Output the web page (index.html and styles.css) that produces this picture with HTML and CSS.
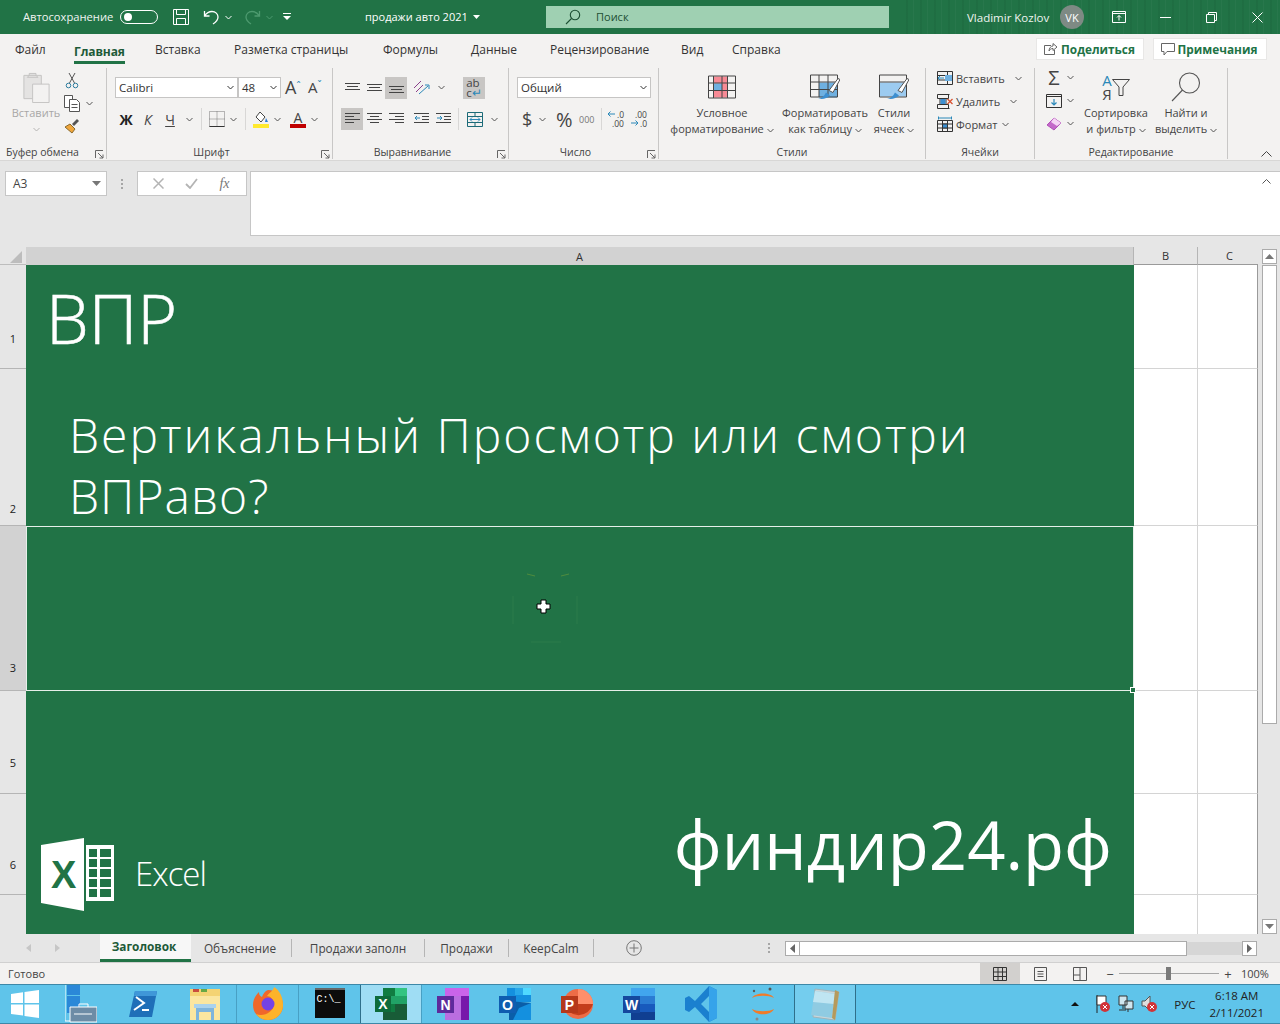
FILE: index.html
```html
<!DOCTYPE html>
<html lang="ru">
<head>
<meta charset="utf-8">
<title>продажи авто 2021 - Excel</title>
<link rel="stylesheet" href="styles.css">
</head>
<body>
<div class="app">
  <header class="titlebar">
    <span class="autosave">Автосохранение</span>
    <span class="toggle"><i class="knob"></i></span>
    <svg class="qa save" width="18" height="18" viewBox="0 0 18 18" fill="none" stroke="#fff"><path d="M1.500 1.500h15v15h-15zM4.500 1.500v5h9v-5M4.500 16.500v-6h9v6"/></svg>
    <svg class="qa undo" width="17" height="17" viewBox="0 0 17 17" fill="none" stroke="#fff" stroke-width="1.300"><path d="M1.500 2v5h5M1.500 7C3.500 4 6 2.500 9 2.500c3.500 0 6 2.500 6 5.500 0 3-2 5-5 7"/></svg>
    <svg class="chev qa-chev" width="7" height="5" viewBox="0 0 7 5" fill="none" stroke="#fff"><path d="M.5 1l3 3 3-3"/></svg>
    <svg class="qa redo" width="17" height="17" viewBox="0 0 17 17" fill="none" stroke="#4d9a6f" stroke-width="1.300"><path d="M15.500 2v5h-5M15.500 7C13.500 4 11 2.500 8 2.500c-3.500 0-6 2.500-6 5.500 0 3 2 5 5 7"/></svg>
    <svg class="chev qa-chev" width="7" height="5" viewBox="0 0 7 5" fill="none" stroke="#4d9a6f"><path d="M.5 1l3 3 3-3"/></svg>
    <svg class="qa more" width="8" height="8" viewBox="0 0 8 8" fill="#fff"><path d="M0 0h8v1H0zM0 3h8L4 7z"/></svg>
    <span class="doc">продажи авто 2021</span>
    <svg class="doc-caret" width="7" height="4" viewBox="0 0 7 4" fill="#fff"><path d="M0 0h7L3.500 4z"/></svg>
    <div class="search">
      <svg width="16" height="16" viewBox="0 0 16 16" fill="none" stroke="#1d4f33" stroke-width="1.100"><circle cx="10" cy="6" r="4.700"/><path d="M6.500 9.500L1 15"/></svg>
      <span>Поиск</span>
    </div>
    <span class="user">Vladimir Kozlov</span>
    <span class="avatar">VK</span>
    <svg class="win w-ribbon" width="14" height="12" viewBox="0 0 14 12" fill="none" stroke="#fff"><path d="M.5.500h13v11H.5zM.5 2.500h13M7 9.500V4.500M5 6.500l2-2 2 2"/></svg>
    <svg class="win w-min" width="11" height="1" viewBox="0 0 11 1" fill="#fff"><path d="M0 0h11v1H0z"/></svg>
    <svg class="win w-max" width="11" height="11" viewBox="0 0 11 11" fill="none" stroke="#fff"><path d="M.5 2.500h8v8h-8zM2.500 2.500v-2h8v8h-2"/></svg>
    <svg class="win w-close" width="11" height="11" viewBox="0 0 11 11" fill="none" stroke="#fff"><path d="M.5.500l10 10M10.500.500l-10 10"/></svg>
  </header>

  <nav class="tabs">
    <div class="tablist">
      <span>Файл</span><span class="tab-on">Главная</span><span>Вставка</span><span>Разметка страницы</span><span>Формулы</span><span>Данные</span><span>Рецензирование</span><span>Вид</span><span>Справка</span>
    </div>
    <div class="tab-actions">
      <span class="pill pill-share"><svg width="15" height="14" viewBox="0 0 15 14" fill="none" stroke="#666"><path d="M8 3.500H1.500v9h10V8M6 9c0-3 2-5 4-5V1.500L14 5l-4 3.500V6.500C8 6.500 7 7.500 6 9z"/></svg>Поделиться</span>
      <span class="pill pill-note"><svg width="14" height="13" viewBox="0 0 14 13" fill="none" stroke="#666"><path d="M.5.500h13v8H6L3 12V8.500H.5z"/></svg>Примечания</span>
    </div>
  </nav>

  <section class="ribbon">
    <div class="group g1">
      <div class="gbody clip">
        <div class="paste">
          <svg width="28" height="31" viewBox="0 0 28 32" fill="#e4e3e2" stroke="#c4c3c2"><path d="M1.500 3.500h18v24h-18zM7 3.500V1.500h7v2l2 2H5z"/><path d="M10.500 12.500h17v19h-17z" fill="#f3f2f1"/></svg>
          <span class="dim">Вставить</span>
          <svg class="chev" width="7" height="5" viewBox="0 0 7 5" fill="none" stroke="#b5b4b3"><path d="M.5 1l3 3 3-3"/></svg>
        </div>
        <div class="clipcol">
          <svg width="14" height="17" viewBox="0 0 14 17" fill="none" stroke="#555"><path d="M4 1l5.500 10M10 1L4.500 11"/><circle cx="3.500" cy="13.500" r="2.300" stroke="#2c7c9f"/><circle cx="10.500" cy="13.500" r="2.300" stroke="#2c7c9f"/></svg>
          <span class="row-inline"><svg width="17" height="17" viewBox="0 0 17 17" fill="#fff" stroke="#555"><path d="M.5.500h8v12h-8z"/><path d="M5.500 4.500h7l3 3v9h-10zM7.500 9.500h6M7.500 12.500h6"/></svg><svg class="chev" width="7" height="5" viewBox="0 0 7 5" fill="none" stroke="#555"><path d="M.5 1l3 3 3-3"/></svg></span>
          <svg width="16" height="16" viewBox="0 0 16 16"><path d="M1 9l5-3 5 5-3 4z" fill="#f0a63c" stroke="#8a6a2c"/><path d="M8 6l5-5 2 2-5 5z" fill="#555"/></svg>
        </div>
      </div>
      <div class="glabel left">Буфер обмена</div>
      <svg class="launch" width="9" height="9" viewBox="0 0 9 9" fill="none" stroke="#666"><path d="M.5 8V.5H8M3 3l5 5M8 4.500V8H4.500"/></svg>
    </div>

    <div class="group g2">
      <div class="gbody">
        <div class="trow">
          <div class="select s-font"><span>Calibri</span><svg class="chev" width="7" height="5" viewBox="0 0 7 5" fill="none" stroke="#333"><path d="M.5 1l3 3 3-3"/></svg></div>
          <div class="select s-size"><span>48</span><svg class="chev" width="7" height="5" viewBox="0 0 7 5" fill="none" stroke="#333"><path d="M.5 1l3 3 3-3"/></svg></div>
          <span class="grow-a">A<sup>ˆ</sup></span><span class="shrink-a">A<sup>ˇ</sup></span>
        </div>
        <div class="trow t2 fontrow">
          <b class="tool w22 fb">Ж</b><i class="tool w22 fi">К</i><u class="tool w22 fu">Ч</u>
          <svg class="chev c12" width="7" height="5" viewBox="0 0 7 5" fill="none" stroke="#555"><path d="M.5 1l3 3 3-3"/></svg>
          <i class="vsep"></i>
          <svg width="16" height="16" viewBox="0 0 16 16" fill="none" stroke="#777" stroke-dasharray="1 1"><path d="M.5.500h15v15H.5zM8 .5v15M.5 8h15"/><path d="M.5 15.500h15" stroke="#333" stroke-dasharray="none"/></svg>
          <svg class="chev c12" width="7" height="5" viewBox="0 0 7 5" fill="none" stroke="#555"><path d="M.5 1l3 3 3-3"/></svg>
          <i class="vsep"></i>
          <svg width="16" height="17" viewBox="0 0 16 17"><path d="M7 1l5 5-4 5-5-5z" fill="#fff" stroke="#444"/><path d="M13 7l2 4h-3z" fill="#2b7cd3"/><path d="M0 13h16v4H0z" fill="#ffe92e"/></svg>
          <svg class="chev c12" width="7" height="5" viewBox="0 0 7 5" fill="none" stroke="#555"><path d="M.5 1l3 3 3-3"/></svg>
          <span class="fcolor">A</span>
          <svg class="chev c12" width="7" height="5" viewBox="0 0 7 5" fill="none" stroke="#555"><path d="M.5 1l3 3 3-3"/></svg>
        </div>
      </div>
      <div class="glabel with-launch">Шрифт</div>
      <svg class="launch" width="9" height="9" viewBox="0 0 9 9" fill="none" stroke="#666"><path d="M.5 8V.5H8M3 3l5 5M8 4.500V8H4.500"/></svg>
    </div>

    <div class="group g3">
      <div class="gbody">
        <div class="trow">
          <span class="tool w22"><svg width="15" height="12" viewBox="0 0 15 12" stroke="#444"><path d="M0 1.500h15M2 4.500h11M0 7.500h15"/></svg></span>
          <span class="tool w22"><svg width="15" height="12" viewBox="0 0 15 12" stroke="#444"><path d="M0 2.500h15M2 5.500h11M0 8.500h15"/></svg></span>
          <span class="tool w22 on"><svg width="15" height="12" viewBox="0 0 15 12" stroke="#444"><path d="M0 4.500h15M2 7.500h11M0 10.500h15"/></svg></span>
          <span class="tool w22 orient"><svg width="18" height="16" viewBox="0 0 18 16" fill="none" stroke="#555"><path d="M1 8l7-7M3 12l7-7" stroke="#8a3f8a"/><path d="M6 14l9-8M12 5h4v4" stroke="#2b88b8"/></svg></span>
          <svg class="chev c12" width="7" height="5" viewBox="0 0 7 5" fill="none" stroke="#555"><path d="M.5 1l3 3 3-3"/></svg>
          <span class="wrap on"><span>ab<br>c<em>↵</em></span></span>
        </div>
        <div class="trow t2">
          <span class="tool w22 on"><svg width="15" height="12" viewBox="0 0 15 12" stroke="#444"><path d="M0 .5h15M0 3.500h9M0 6.500h15M0 9.500h9"/></svg></span>
          <span class="tool w22"><svg width="15" height="12" viewBox="0 0 15 12" stroke="#444"><path d="M0 .5h15M3 3.500h9M0 6.500h15M3 9.500h9"/></svg></span>
          <span class="tool w22"><svg width="15" height="12" viewBox="0 0 15 12" stroke="#444"><path d="M0 .5h15M6 3.500h9M0 6.500h15M6 9.500h9"/></svg></span>
          <span class="tool w22 ind"><svg width="15" height="12" viewBox="0 0 15 12" fill="none" stroke="#444"><path d="M0 .5h15M8 3.500h7M8 6.500h7M0 9.500h15"/><path d="M6 5H1M3 3L1 5l2 2" stroke="#2b88b8"/></svg></span>
          <span class="tool w22"><svg width="15" height="12" viewBox="0 0 15 12" fill="none" stroke="#444"><path d="M0 .5h15M8 3.500h7M8 6.500h7M0 9.500h15"/><path d="M1 5h5M4 3l2 2-2 2" stroke="#2b88b8"/></svg></span>
          <i class="vsep v-merge"></i>
          <span class="tool w22"><svg width="16" height="15" viewBox="0 0 16 15" fill="none" stroke="#1c6b78"><path d="M.5.500h15v14H.5zM.5 4.500h15M.5 10.500h15M8 .5v4M8 10.500v4"/><path d="M3 7.500h10M5 5.500l-2 2 2 2M11 5.500l2 2-2 2" stroke="#2b88b8"/></svg></span>
          <svg class="chev c12" width="7" height="5" viewBox="0 0 7 5" fill="none" stroke="#555"><path d="M.5 1l3 3 3-3"/></svg>
        </div>
      </div>
      <div class="glabel with-launch">Выравнивание</div>
      <svg class="launch" width="9" height="9" viewBox="0 0 9 9" fill="none" stroke="#666"><path d="M.5 8V.5H8M3 3l5 5M8 4.500V8H4.500"/></svg>
    </div>

    <div class="group g4">
      <div class="gbody">
        <div class="trow">
          <div class="select s-num"><span>Общий</span><svg class="chev" width="7" height="5" viewBox="0 0 7 5" fill="none" stroke="#333"><path d="M.5 1l3 3 3-3"/></svg></div>
        </div>
        <div class="trow t2 numrow">
          <span class="n-dollar">$</span>
          <svg class="chev c12" width="7" height="5" viewBox="0 0 7 5" fill="none" stroke="#555"><path d="M.5 1l3 3 3-3"/></svg>
          <span class="n-pct">%</span>
          <span class="n-000">000</span>
          <i class="vsep"></i>
          <svg class="decsvg" width="20" height="18" viewBox="0 0 20 18" fill="none"><path d="M1 4h7M3.500 1.500L1 4l2.500 2.500" stroke="#2b88b8"/><text x="10" y="8" class="dec">.0</text><text x="5" y="17" class="dec">.00</text></svg>
          <svg class="decsvg" width="20" height="18" viewBox="0 0 20 18" fill="none"><path d="M1 13h7M5.500 10.500L8 13l-2.500 2.500" stroke="#2b88b8"/><text x="5" y="8" class="dec">.00</text><text x="10" y="17" class="dec">.0</text></svg>
        </div>
      </div>
      <div class="glabel with-launch">Число</div>
      <svg class="launch" width="9" height="9" viewBox="0 0 9 9" fill="none" stroke="#666"><path d="M.5 8V.5H8M3 3l5 5M8 4.500V8H4.500"/></svg>
    </div>

    <div class="group g5">
      <div class="gbody bigrow">
        <div class="big b-cond">
          <svg width="28" height="23" viewBox="0 0 28 23"><path d="M5 1h14v7H5zM14 8h5v7h-5zM5 15h14v7H5z" fill="#f78a95"/><path d="M5 8h9v7H5z" fill="#6fb0e0"/><path d="M.5.500h27v22H.5zM.5 7.500h27M.5 15h27M5.500.5v22M14 .5v22M19.500.5v22" fill="none" stroke="#444"/></svg>
          <span>Условное</span><span>форматирование <svg class="chev" width="7" height="5" viewBox="0 0 7 5" fill="none" stroke="#555"><path d="M.5 1l3 3 3-3"/></svg></span>
        </div>
        <div class="big b-table">
          <svg width="30" height="25" viewBox="0 0 30 25"><path d="M9 8h18v15H9z" fill="#6fb0e0"/><path d="M.5.500h27v22H.5zM.5 7.500h27M.5 15h27M9 .5v22M18 .5v22" fill="none" stroke="#444"/><path d="M19 16L28 4l2 1-7 13z" fill="#fff" stroke="#555"/><path d="M8 24c3 0 6-2 8-6l4 3c-3 3-7 4-12 3z" fill="#3d8fd0"/></svg>
          <span>Форматировать</span><span>как таблицу <svg class="chev" width="7" height="5" viewBox="0 0 7 5" fill="none" stroke="#555"><path d="M.5 1l3 3 3-3"/></svg></span>
        </div>
        <div class="big b-style">
          <svg width="30" height="25" viewBox="0 0 30 25"><path d="M1 8h26v14H1z" fill="#9ccbf0"/><path d="M.5.500h27v22H.5zM.5 7.500h27" fill="none" stroke="#444"/><path d="M19 16L28 4l2 1-7 13z" fill="#fff" stroke="#555"/><path d="M8 24c3 0 6-2 8-6l4 3c-3 3-7 4-12 3z" fill="#3d8fd0"/></svg>
          <span>Стили</span><span>ячеек <svg class="chev" width="7" height="5" viewBox="0 0 7 5" fill="none" stroke="#555"><path d="M.5 1l3 3 3-3"/></svg></span>
        </div>
      </div>
      <div class="glabel">Стили</div>
    </div>

    <div class="group g6">
      <div class="gbody cells">
        <div class="cellrow"><svg width="16" height="15" viewBox="0 0 16 15" fill="none" stroke="#333"><path d="M.5.500h15v13H.5zM.5 4.500h15M.5 9h15M10.500.5v13" /><path d="M8 4h7v6H8z" fill="#6fb0e0" stroke="none"/><path d="M1 7h6M3 5L1 7l2 2" stroke="#2b88b8"/></svg><span>Вставить</span><svg class="chev c-ins" width="7" height="5" viewBox="0 0 7 5" fill="none" stroke="#555"><path d="M.5 1l3 3 3-3"/></svg></div>
        <div class="cellrow"><svg width="16" height="15" viewBox="0 0 16 15" fill="none" stroke="#333"><path d="M.5.500h12M.5 14.500h12M.5.500v4h11v-4M.5 14.500v-4h11v4M3 4.500h6v6H3z"/><path d="M3.500 5h5v5h-5z" fill="#3d8fd0" stroke="none"/><path d="M10.500 5l5 5M15.500 5l-5 5" stroke="#d8512f" stroke-width="1.300"/></svg><span>Удалить</span><svg class="chev c-del" width="7" height="5" viewBox="0 0 7 5" fill="none" stroke="#555"><path d="M.5 1l3 3 3-3"/></svg></div>
        <div class="cellrow"><svg width="16" height="16" viewBox="0 0 16 16" fill="none" stroke="#333"><path d="M1.500.5v3M14.500.5v3M1.500 2h13" stroke="#2b88b8"/><path d="M.5 4.500h15v11H.5zM.5 8h15M.5 12h15M5.500 4.500v11M10.500 4.500v11"/><path d="M5.500 8h5v4h-5z" fill="#3d8fd0"/></svg><span>Формат</span><svg class="chev c-fmt" width="7" height="5" viewBox="0 0 7 5" fill="none" stroke="#555"><path d="M.5 1l3 3 3-3"/></svg></div>
      </div>
      <div class="glabel">Ячейки</div>
    </div>

    <div class="group g7">
      <div class="gbody bigrow">
        <div class="editcol">
          <div class="editrow"><span class="sigma">Σ</span><svg class="chev" width="7" height="5" viewBox="0 0 7 5" fill="none" stroke="#555"><path d="M.5 1l3 3 3-3"/></svg></div>
          <div class="editrow"><svg width="16" height="14" viewBox="0 0 16 14" fill="none" stroke="#333"><path d="M.5.500h15v13H.5zM.5 2.500h15"/><path d="M8 5v6M5.500 8.500L8 11l2.500-2.500" stroke="#2b88b8" stroke-width="1.200"/></svg><svg class="chev" width="7" height="5" viewBox="0 0 7 5" fill="none" stroke="#555"><path d="M.5 1l3 3 3-3"/></svg></div>
          <div class="editrow"><svg width="16" height="14" viewBox="0 0 16 14"><path d="M1 8l7-7 7 5-7 7z" fill="#c368c9" stroke="#b14fb8"/><path d="M5 5l6 4 4-3-7-5z" fill="#f5d3f5"/></svg><svg class="chev" width="7" height="5" viewBox="0 0 7 5" fill="none" stroke="#555"><path d="M.5 1l3 3 3-3"/></svg></div>
        </div>
        <div class="big b-sort">
          <div class="sorticon"><span class="az"><em>А</em><b>Я</b></span><svg width="18" height="17" viewBox="0 0 18 17" fill="none" stroke="#444"><path d="M.5.500h17L11 8v8.500H7V8z"/></svg></div>
          <span>Сортировка</span><span>и фильтр <svg class="chev" width="7" height="5" viewBox="0 0 7 5" fill="none" stroke="#555"><path d="M.5 1l3 3 3-3"/></svg></span>
        </div>
        <div class="big b-find">
          <svg width="30" height="30" viewBox="0 0 30 30" fill="none" stroke="#555" stroke-width="1.100"><circle cx="18.500" cy="11" r="10"/><path d="M11.500 18L1 29"/></svg>
          <span>Найти и</span><span>выделить <svg class="chev" width="7" height="5" viewBox="0 0 7 5" fill="none" stroke="#555"><path d="M.5 1l3 3 3-3"/></svg></span>
        </div>
      </div>
      <div class="glabel">Редактирование</div>
    </div>
    <svg class="collapse" width="11" height="6" viewBox="0 0 11 6" fill="none" stroke="#444"><path d="M.5 5.500l5-5 5 5"/></svg>
  </section>

  <section class="formula">
    <div class="namebox"><span>A3</span><svg width="9" height="5" viewBox="0 0 9 5" fill="#777"><path d="M0 0h9L4.500 5z"/></svg></div>
    <span class="fdots"><i></i><i></i><i></i></span>
    <div class="fbtns">
      <svg width="11" height="11" viewBox="0 0 11 11" fill="none" stroke="#b4b4b4" stroke-width="1.500"><path d="M.5.500l10 10M10.500.500l-10 10"/></svg>
      <svg width="13" height="11" viewBox="0 0 13 11" fill="none" stroke="#b4b4b4" stroke-width="1.800"><path d="M1 6l4 4 7-9"/></svg>
      <span class="fx">fx</span>
    </div>
    <div class="finput"><svg width="9" height="5" viewBox="0 0 9 5" fill="none" stroke="#555"><path d="M.5 4.500l4-4 4 4"/></svg></div>
  </section>

  <main class="sheet">
    <div class="corner"><svg width="12" height="12" viewBox="0 0 12 12" fill="#bdbdbd"><path d="M12 0v12H0z"/></svg></div>
    <div class="colhead col-a">A</div>
    <div class="colhead col-b">B</div>
    <div class="colhead col-c">C</div>

    <div class="rowhead rh1">1</div>
    <div class="rowhead rh2">2</div>
    <div class="rowhead rh3 sel">3</div>
    <div class="rowhead rh5">5</div>
    <div class="rowhead rh6">6</div>
    <div class="rowhead rh7"></div>

    <div class="hero">
      <div class="h1"><span>ВПР</span></div>
      <div class="h2"><p><span class="l1">Вертикальный Просмотр или смотри</span><br><span class="l2">ВПРаво?</span></p></div>
      <div class="h3">
        <svg class="ghost" width="70" height="72" viewBox="0 0 70 72" fill="none" stroke="#2d7d4a"><path d="M16 2l8 2M58 2l-8 2" stroke="#4f8c3e"/><path d="M2 24v28M66 24v28M20 70h30"/></svg>
        <svg class="plus" width="15" height="15" viewBox="0 0 15 15"><path d="M5 1h5v4h4v5h-4v4H5v-4H1V5h4z" fill="#fff" stroke="#000"/></svg>
        <i class="handle"></i>
      </div>
      <div class="h5"></div>
      <div class="h6">
        <div class="xl">
          <svg width="73" height="73" viewBox="0 0 73 73"><path d="M0 7L43 0v73L0 65z" fill="#fff"/><text x="10" y="50" class="xl-x">X</text><path d="M45 7h28v56H45zM48 11v8h8v-8zM59 11v8h11v-8zM48 21v8h8v-8zM59 21v8h11v-8zM48 31v8h8v-8zM59 31v8h11v-8zM48 41v8h8v-8zM59 41v8h11v-8zM48 51v8h8v-8zM59 51v8h11v-8z" fill="#fff" fill-rule="evenodd"/></svg>
          <span>Excel</span>
        </div>
        <span class="site">финдир24.рф</span>
      </div>
      <div class="h7"></div>
    </div>

    <div class="cell c1 cb"></div><div class="cell c1 cc"></div>
    <div class="cell c2 cb"></div><div class="cell c2 cc"></div>
    <div class="cell c3 cb"></div><div class="cell c3 cc"></div>
    <div class="cell c5 cb"></div><div class="cell c5 cc"></div>
    <div class="cell c6 cb"></div><div class="cell c6 cc"></div>
    <div class="cell c7 cb"></div><div class="cell c7 cc"></div>

    <div class="vscroll">
      <span class="sbtn"><svg width="9" height="5" viewBox="0 0 9 5" fill="#777"><path d="M0 5h9L4.500 0z"/></svg></span>
      <span class="vthumb"></span>
      <span class="vtrack"></span>
      <span class="sbtn"><svg width="9" height="5" viewBox="0 0 9 5" fill="#777"><path d="M0 0h9L4.500 5z"/></svg></span>
    </div>
  </main>

  <section class="sheetbar">
    <span class="nav"><svg width="5" height="8" viewBox="0 0 5 8" fill="#c6c6c6"><path d="M5 0v8L0 4z"/></svg><svg width="5" height="8" viewBox="0 0 5 8" fill="#c6c6c6"><path d="M0 0v8l5-4z"/></svg></span>
    <div class="sheets">
      <span class="st st-on">Заголовок</span><span class="st st1">Объяснение</span><span class="st st2">Продажи заполн</span><span class="st st3">Продажи</span><span class="st st4">KeepCalm</span>
    </div>
    <svg class="addsheet" width="16" height="16" viewBox="0 0 16 16" fill="none" stroke="#777"><circle cx="8" cy="8" r="7.300"/><path d="M8 3.500v9M3.500 8h9"/></svg>
    <span class="fdots hd"><i></i><i></i><i></i></span>
    <div class="hscroll">
      <span class="hbtn"><svg width="5" height="9" viewBox="0 0 5 9" fill="#666"><path d="M5 0v9L0 4.500z"/></svg></span>
      <span class="hthumb"></span>
      <span class="htrack"></span>
      <span class="hbtn"><svg width="5" height="9" viewBox="0 0 5 9" fill="#666"><path d="M0 0v9l5-4.500z"/></svg></span>
    </div>
  </section>

  <footer class="status">
    <span class="ready">Готово</span>
    <span class="vw vw-on"><svg width="14" height="14" viewBox="0 0 14 14" fill="none" stroke="#333"><path d="M.5.500h13v13H.5zM.5 5h13M.5 9.500h13M5 .5v13M9.500 .5v13"/></svg></span>
    <span class="vw"><svg width="13" height="14" viewBox="0 0 13 14" fill="none" stroke="#555"><path d="M.5.500h12v13H.5zM3.500 4.500h6M3.500 7h6M3.500 9.500h6"/></svg></span>
    <span class="vw"><svg width="14" height="14" viewBox="0 0 14 14" fill="none" stroke="#555"><path d="M.5.500h13v13H.5zM.5 8h6.500V.5M7 8v5.500"/></svg></span>
    <span class="zm">−</span>
    <span class="slider"><i></i></span>
    <span class="zm">+</span>
    <span class="pct">100%</span>
  </footer>

  <div class="taskbar">
    <span class="tk tk-start"><svg width="28" height="28" viewBox="0 0 28 28" fill="#fff"><path d="M0 4l12-1.700V13H0zM13.500 2.100L28 0v13H13.500zM0 14.500h12v11L0 24zM13.500 14.500H28V28l-14.500-2z"/></svg></span>
    <span class="tk"><svg width="32" height="38" viewBox="0 0 32 38"><path d="M2 0h13v10H2zM2 11h13v17H2z" fill="#2b88d8"/><path d="M0 0v36h5" fill="none" stroke="#fff"/><path d="M5 22h27v15H5z" fill="#6d8ca6" stroke="#fff"/><path d="M14 22v-3h9v3M9 29h18" fill="none" stroke="#fff"/></svg></span>
    <span class="tk"><svg width="28" height="28" viewBox="0 0 28 28"><path d="M6 1h22l-5 26H0z" fill="#1f6fb8"/><path d="M6 1h22l-1 5H5z" fill="#3f97d8"/><path d="M7 7l8 6-10 7M13 20h7" fill="none" stroke="#fff" stroke-width="2"/></svg></span>
    <span class="tk"><svg width="32" height="32" viewBox="0 0 32 32"><path d="M1 1h30v16H1z" fill="#f4d373"/><path d="M4 1h6v3H4z" fill="#c94d3f"/><path d="M12 1h6v3h-6z" fill="#67a845"/><path d="M1 8h30v24H1z" fill="#fbe6a0"/><path d="M7 19h18v13h-3v-8H10v8H7z" fill="#7fb5dc"/><path d="M5 16h22v4H5z" fill="#a9d2ee"/></svg></span>
    <span class="tk tk-sep"><svg width="30" height="34" viewBox="0 0 30 34"><path d="M15 3c8 0 15 6 15 15s-7 15-15 15S0 27 0 18C0 12 3 8 6 5c0 3 1 4 3 5 1-3 3-6 6-7z" fill="#f0682a"/><path d="M30 18c0 9-7 15-15 15-5 0-9-2-12-6 8 3 17-2 18-9 0-6-4-9-7-9 3-4 7-6 7-9 5 3 9 9 9 18z" fill="#fdb32a"/><circle cx="15" cy="17" r="6.500" fill="#7542e5"/></svg></span>
    <span class="tk tk-sep"><span class="cmd">C:\_</span></span>
    <span class="tk tk-on"><svg width="32" height="32" viewBox="0 0 32 32"><path d="M8 0h24v32H8z" fill="#21a366"/><path d="M8 0h12v8H8zM8 16h12v8H8z" fill="#107c41"/><path d="M20 0h12v8H20z" fill="#33c481"/><path d="M20 16h12v8H20z" fill="#185c37"/><path d="M8 24h24v8H8z" fill="#185c37"/><path d="M0 8h16v16H0z" fill="#0e6b3a"/><text x="8" y="21" class="app-l">X</text></svg></span>
    <span class="tk"><svg width="32" height="32" viewBox="0 0 32 32"><path d="M8 0h24v32H8z" fill="#ba6ee0"/><path d="M8 0h24v8H8z" fill="#ca64ea"/><path d="M24 8h8v24h-8z" fill="#7719aa"/><path d="M0 8h17v17H0z" fill="#5e2a9b"/><text x="8.500" y="21.500" class="app-l">N</text></svg></span>
    <span class="tk"><svg width="32" height="32" viewBox="0 0 32 32"><path d="M8 0h24v14H8z" fill="#1490df"/><path d="M16 0h8v7h-8z" fill="#28a8ea"/><path d="M24 0h8v7h-8z" fill="#50d9ff"/><path d="M10 13l22 2v17H10z" fill="#0a5ea8"/><path d="M20 20l12-5v17H14z" fill="#1490df"/><path d="M0 8h17v17H0z" fill="#0f5db0"/><text x="8.500" y="21.500" class="app-l">O</text></svg></span>
    <span class="tk"><svg width="32" height="32" viewBox="0 0 32 32"><circle cx="17" cy="16" r="15" fill="#ed6c47"/><path d="M17 1a15 15 0 0 1 15 15H17z" fill="#ff8f6b"/><path d="M3 16h29a15 15 0 0 1-29 0z" fill="#c43e1c"/><path d="M0 8h17v17H0z" fill="#b5381a"/><text x="8.500" y="21.500" class="app-l">P</text></svg></span>
    <span class="tk"><svg width="32" height="32" viewBox="0 0 32 32"><path d="M8 0h24v8H8z" fill="#41a5ee"/><path d="M8 8h24v8H8z" fill="#2b7cd3"/><path d="M8 16h24v8H8z" fill="#185abd"/><path d="M8 24h24v8H8z" fill="#103f91"/><path d="M0 8h17v17H0z" fill="#15489e"/><text x="8.500" y="21.500" class="app-l">W</text></svg></span>
    <span class="tk"><svg width="32" height="36" viewBox="0 0 32 36"><path d="M24 0l8 4v28l-8 4L10 21l-6 5-4-2V12l4-2 6 5zM24 10l-8 8 8 8z" fill="#1b80cf"/><path d="M24 0l8 4v28l-8 4z" fill="#36a3ea"/></svg></span>
    <span class="tk"><svg width="24" height="36" viewBox="0 0 24 36"><path d="M1 12C4 6 20 6 23 12 18 9 6 9 1 12zM1 23c5 3 17 3 22 0-3 7-19 7-22 0z" fill="#f07c2a"/><circle cx="19" cy="3" r="1.500" fill="#555"/><circle cx="3" cy="5" r="1.200" fill="#555"/><circle cx="6" cy="33" r="1.500" fill="#888"/></svg></span>
    <span class="tk tk-open"><svg width="32" height="36" viewBox="0 0 32 36"><path d="M6 3l24 3-4 28-22-3z" fill="#c9d6da" stroke="#9fb4ba"/><path d="M6 5l20 3-3 24L2 29z" fill="#8fcbe2"/><path d="M6 5l20 3-1 10L4 16z" fill="#bfe5f2"/><path d="M26 4l4 2-4 28-3-2z" fill="#b59a5c"/></svg></span>
    <div class="tray">
      <svg class="tray-up" width="8" height="4" viewBox="0 0 8 4" fill="#111"><path d="M0 4h8L4 0z"/></svg>
      <svg width="16" height="18" viewBox="0 0 16 18"><path d="M2 0v18" stroke="#222"/><path d="M2 1h9v9H2z" fill="#fff" stroke="#333"/><circle cx="10" cy="12" r="5" fill="#d13438"/><path d="M8 10l4 4M12 10l-4 4" stroke="#fff"/></svg>
      <svg width="16" height="18" viewBox="0 0 16 18"><path d="M1 1h8v9H1zM7 6h8v8H7z" fill="#cfe6ef" stroke="#333"/><path d="M5 10v4M1 15h7M10 14v3" stroke="#333"/></svg>
      <svg width="16" height="18" viewBox="0 0 16 18"><path d="M1 6h3l5-5v15l-5-5H1z" fill="#ddd" stroke="#555"/><circle cx="11" cy="12" r="5" fill="#d13438"/><path d="M9 10l4 4M13 10l-4 4" stroke="#fff"/></svg>
      <span class="lang">РУС</span>
      <span class="clock"><span>6:18 AM</span><span>2/11/2021</span></span>
    </div>
  </div>
</div>
</body>
</html>
```

FILE: styles.css
```css
* { box-sizing: border-box; }
html, body { margin: 0; padding: 0; }
body { width: 1280px; height: 1024px; overflow: hidden; font-family: "Open Sans", "Liberation Sans", sans-serif; font-size: 12px; color: #333; }
.app { display: flex; flex-direction: column; width: 1280px; height: 1024px; }
svg { display: block; flex: none; }
.chev { display: inline-block; vertical-align: middle; }

.titlebar { display: flex; align-items: center; height: 34px; color: #fff; flex: none; background-color: #217346; background-image: repeating-linear-gradient(90deg, transparent 0 6px, rgba(0, 40, 20, .07) 6px 8px, transparent 8px 13px, rgba(255, 255, 255, .03) 13px 14px); background-size: 380px 100%; background-position: right top; background-repeat: no-repeat; }
.autosave { margin-left: 23px; width: 97px; font-size: 11.200px; color: #f0f5f2; margin-top: -2px; }
.toggle { display: flex; align-items: center; width: 38px; height: 14px; border: 1px solid #fff; border-radius: 7px; padding-left: 3px; }
.knob { width: 8px; height: 8px; border-radius: 50%; background: #fff; }
.save { margin-left: 14px; }
.undo { margin-left: 13px; }
.qa-chev { margin-left: 5px; }
.redo { margin-left: 12px; }
.more { margin-left: 10px; }
.doc { margin-left: 74px; font-size: 11px; width: 107px; white-space: nowrap; margin-top: -2px; }
.doc-caret { margin-left: 1px; }
.search { display: flex; align-items: center; width: 343px; height: 22px; margin-left: 66px; background: #9fd0b2; color: #1d4f33; padding-left: 19px; gap: 15px; font-size: 11px; }
.search span { margin-top: -2px; }
.user { margin-left: 78px; width: 93px; font-size: 11.500px; white-space: nowrap; color: #eef4f0; }
.avatar { display: flex; align-items: center; justify-content: center; width: 24px; height: 24px; border-radius: 50%; background: #7e8a84; font-size: 11px; }
.w-ribbon { margin-left: 28px; }
.w-min { margin-left: 34px; }
.w-max { margin-left: 35px; }
.w-close { margin-left: 35px; }

.tabs { display: flex; height: 32px; background: #f3f2f1; flex: none; }
.tablist { display: grid; grid-template-columns: 59px 81px 79px 149px 88px 79px 131px 51px 60px; margin-left: 15px; align-items: center; font-size: 12px; white-space: nowrap; }
.tablist span { line-height: 30px; }
.tab-on { font-weight: 700; color: #1d5a38; justify-self: start; height: 27px; border-bottom: 3px solid #217346; letter-spacing: -.1px; }
.tab-actions { display: flex; gap: 9px; margin-left: auto; margin-right: 13px; padding-top: 4px; }
.pill { display: flex; align-items: center; justify-content: center; gap: 3px; height: 22px; background: #fff; border: 1px solid #e8e7e6; font-weight: 700; color: #217346; font-size: 11.800px; padding-right: 2px; }
.pill-share { width: 108px; }
.pill-note { width: 114px; }

.ribbon { display: flex; height: 95px; background: #f3f2f1; border-bottom: 1px solid #d8d7d6; flex: none; position: relative; font-size: 11px; }
.group { display: flex; flex-direction: column; position: relative; height: 91px; margin-top: 2px; border-right: 1px solid #c8c7c6; }
.g1 { width: 107px; }
.g2 { width: 226px; }
.g3 { width: 176px; }
.g4 { width: 150px; }
.g5 { width: 267px; }
.g6 { width: 109px; }
.g7 { width: 193px; }
.gbody { height: 79px; padding-top: 9px; }
.glabel { font-size: 10.500px; text-align: center; line-height: 14px; color: #444; white-space: nowrap; }
.glabel.left { text-align: left; padding-left: 6px; }
.with-launch { padding-right: 16px; }
.launch { position: absolute; right: 2px; bottom: 0; }
.collapse { position: absolute; right: 8px; bottom: 3px; }

.clip { display: flex; padding-top: 4px; }
.paste { display: flex; flex-direction: column; align-items: center; width: 64px; padding-left: 8px; gap: 3px; }
.dim { color: #a8a7a6; font-size: 11px; line-height: 12px; margin-top: 1px; }
.paste .chev { margin-top: 5px; }
.clipcol { display: flex; flex-direction: column; align-items: flex-start; gap: 6px; }
.clipcol > svg:first-child { margin-left: 1px; }
.row-inline { display: flex; align-items: center; gap: 5px; }

.trow { display: flex; align-items: center; height: 21px; padding-left: 8px; }
.t2 { margin-top: 10px; height: 22px; }
.select { display: flex; align-items: center; justify-content: space-between; height: 21px; background: #fff; border: 1px solid #c6c5c4; padding: 0 3px; font-size: 11.500px; color: #333; }
.s-font { width: 123px; }
.s-size { width: 43px; margin-left: 0; }
.s-num { width: 134px; }
.grow-a, .shrink-a { font-size: 18px; color: #444; margin-left: 4px; line-height: 21px; width: 20px; white-space: nowrap; }
.grow-a sup, .shrink-a sup { font-size: 10px; color: #2b88b8; vertical-align: 4px; line-height: 0; }
.shrink-a { font-size: 15px; margin-left: 3px; }
.tool { display: flex; align-items: center; justify-content: center; height: 22px; font-style: normal; text-decoration: none; }
.w22 { width: 22px; }
.fontrow { padding-left: 8px; }
.fb { font-size: 14px; color: #222; font-weight: 700; }
.fi { font-size: 14px; font-style: italic; color: #444; }
.fu { font-size: 14px; text-decoration: underline; color: #444; }
.c12 { margin: 0 3px 0 5px; }
.vsep { display: block; width: 1px; height: 22px; background: #d8d7d6; margin: 0 7px 0 5px; }
.v-merge { margin: 0 5px 0 4px; }
.fcolor { display: block; width: 16px; height: 17px; margin-left: 6px; font-size: 14px; line-height: 13px; text-align: center; border-bottom: 4px solid #c00000; color: #444; }
.on { background: #c8c6c4; }
.orient { margin-left: 4px; }
.wrap { display: flex; align-items: center; justify-content: center; width: 22px; height: 22px; margin-left: 15px; font-size: 11.500px; line-height: 10px; color: #444; text-align: left; }
.wrap em { font-style: normal; color: #2b88b8; }
.ind { margin-left: 3px; }
.numrow { padding-left: 13px; gap: 0; }
.n-dollar { font-size: 18px; color: #444; width: 12px; }
.n-pct { font-size: 20px; color: #444; margin-left: 7px; width: 22px; }
.n-000 { font-size: 9px; color: #777; margin-left: 1px; width: 19px; }
.numrow .vsep { margin: 0 5px 0 3px; }
.numrow .decsvg + .decsvg { margin-left: 3px; }
.dec { font-size: 8.500px; fill: #444; font-family: "Open Sans", sans-serif; }

.bigrow { display: flex; padding-top: 4px; }
.big { display: flex; flex-direction: column; align-items: center; font-size: 11px; line-height: 16px; white-space: nowrap; color: #444; }
.big > svg, .big > .sorticon { height: 30px; margin-bottom: 3px; }
.big > svg { align-self: center; }
.b-cond { width: 126px; }
.b-table { width: 80px; }
.b-style { width: 58px; }
.cells { padding: 2px 0 0 11px; display: flex; flex-direction: column; gap: 7px; }
.cellrow { display: flex; align-items: center; height: 16px; font-size: 11px; color: #444; gap: 3px; }
.c-ins { margin-left: 7px; }
.c-del { margin-left: 7px; }
.c-fmt { margin-left: 2px; }
.editcol { display: flex; flex-direction: column; gap: 8px; padding: 0 0 0 11px; margin-top: -2px; width: 41px; flex: none; }
.editrow { display: flex; align-items: center; height: 15px; gap: 5px; }
.sigma { font-size: 20px; line-height: 15px; width: 16px; color: #444; text-align: center; }
.b-sort { width: 78px; margin-left: 1px; }
.b-find { width: 62px; }
.sorticon { display: flex; align-items: center; gap: 0; }
.az { display: flex; flex-direction: column; font-size: 15px; line-height: 14px; text-align: center; }
.az em { font-style: normal; color: #2b88b8; }
.az b { font-weight: 400; color: #444; }

.formula { display: flex; align-items: flex-start; height: 86px; background: #e6e6e6; padding: 10px 0 0 5px; flex: none; }
.namebox { display: flex; align-items: center; justify-content: space-between; width: 102px; height: 25px; background: #fff; border: 1px solid #c6c6c6; padding: 0 5px 0 7px; font-size: 12px; color: #444; }
.fdots { display: flex; flex-direction: column; gap: 2px; margin: 8px 14px 0 14px; }
.fdots i { display: block; width: 2px; height: 2px; background: #a6a6a6; }
.fbtns { display: flex; align-items: center; justify-content: space-around; width: 110px; height: 25px; padding: 0 6px 0 5px; background: #fff; border: 1px solid #c6c6c6; }
.fx { font-family: "Liberation Serif", serif; font-style: italic; font-size: 14px; color: #777; }
.finput { display: flex; justify-content: flex-end; margin-left: 3px; width: 1030px; height: 65px; padding: 7px 9px 0 0; background: #fff; border: 1px solid #c6c6c6; border-right: 0; }

.sheet { display: grid; grid-template-columns: 26px 1108px 64px 60px 22px; grid-template-rows: 18px 104px 157px 165px 103px 101px 39px; height: 687px; background: #e6e6e6; flex: none; }
.corner { display: flex; align-items: flex-end; justify-content: flex-end; padding: 0 4px 1px 0; border-bottom: 1px solid #bdbdbd; grid-column: 1; grid-row: 1; }
.colhead { display: flex; align-items: flex-end; justify-content: center; font-size: 11px; line-height: 17px; color: #333; border-right: 1px solid #b5b5b5; border-bottom: 1px solid #9a9a9a; }
.col-a { background: #d2d2d2; grid-column: 2; grid-row: 1; border-bottom: 0; }
.col-b { grid-column: 3; grid-row: 1; }
.col-c { grid-column: 4; grid-row: 1; border-right: 0; padding-left: 3px; }
.rowhead { grid-column: 1; display: flex; align-items: flex-end; justify-content: center; font-size: 11px; line-height: 14px; color: #222; border-bottom: 1px solid #b5b5b5; }
.rh1 { grid-row: 2; padding-bottom: 22px; }
.rh2 { grid-row: 3; padding-bottom: 9px; }
.rh3 { grid-row: 4; padding-bottom: 15px; }
.rh5 { grid-row: 5; padding-bottom: 23px; }
.rh6 { grid-row: 6; padding-bottom: 22px; }
.rh7 { grid-row: 7; border-bottom: 0; }
.sel { background: #d2d2d2; }

.hero { grid-column: 2; grid-row: 2 / 8; display: grid; grid-template-rows: 104px 157px 165px 103px 101px 39px; background: #217346; color: #fff; }
.h1 { padding: 9px 0 0 20px; font-weight: 300; font-size: 68px; line-height: 88px; -webkit-text-stroke: .6px #fff; }
.h2 { display: flex; align-items: flex-end; padding: 0 0 0 43px; }
.h2 p { margin: 0; font-weight: 300; font-size: 48px; line-height: 61px; white-space: nowrap; }
.l1 { letter-spacing: 2px; }
.l2 { letter-spacing: 1px; }
.h3 { position: relative; border: 1px solid #e6efe9; }
.plus { position: absolute; left: 509px; top: 72px; }
.ghost { position: absolute; left: 484px; top: 45px; }
.handle { position: absolute; right: -3px; bottom: -3px; width: 6px; height: 6px; background: #217346; border: 1px solid #fff; }
.h6 { display: flex; align-items: flex-end; justify-content: space-between; padding: 0 22px 0 15px; }
.xl { display: flex; align-items: center; gap: 21px; margin-bottom: -16px; }
.xl span { font-size: 33px; font-weight: 300; letter-spacing: -1px; margin-bottom: 2px; }
.xl-x { font-family: "Liberation Sans", sans-serif; font-weight: 700; font-size: 38px; fill: #217346; }
.site { font-size: 67px; line-height: 84px; margin-bottom: 9px; white-space: nowrap; }

.cell { background: #fff; border-bottom: 1px solid #d4d4d4; }
.cb { grid-column: 3; border-right: 1px solid #d4d4d4; }
.cc { grid-column: 4; border-right: 1px solid #9a9a9a; }
.c1 { grid-row: 2; }
.c2 { grid-row: 3; }
.c3 { grid-row: 4; }
.c5 { grid-row: 5; }
.c6 { grid-row: 6; }
.c7 { grid-row: 7; border-bottom: 0; }
.vscroll { grid-column: 5; grid-row: 1 / 8; display: flex; flex-direction: column; padding: 2px 3px 0 4px; }
.sbtn { display: flex; align-items: center; justify-content: center; height: 15px; background: #fff; border: 1px solid #ababab; flex: none; }
.vthumb { height: 459px; background: #fff; border: 1px solid #ababab; flex: none; margin-top: 1px; }
.vtrack { flex: 1; }

.sheetbar { display: flex; align-items: center; height: 29px; background: #e6e6e6; border-bottom: 1px solid #d0d0d0; flex: none; }
.nav { display: flex; gap: 24px; margin-left: 26px; width: 74px; }
.sheets { display: flex; align-items: stretch; height: 28px; margin-top: -1px; }
.st { display: flex; align-items: center; font-size: 11.800px; color: #444; border-right: 1px solid #b5b5b5; justify-content: center; white-space: nowrap; height: 18px; align-self: center; }
.st-on { height: 28px; width: 91px; background: #f7f7f7; border-right: 0; border-bottom: 3px solid #217346; font-weight: 700; color: #1d5a38; padding-right: 3px; }
.st1 { width: 101px; padding-right: 2px; }
.st2 { width: 133px; }
.st3 { width: 84px; }
.st4 { width: 85px; }
.addsheet { margin-left: 32px; }
.hd { margin: 0 0 0 126px; }
.hscroll { display: flex; align-items: center; margin-left: 15px; width: 472px; height: 15px; }
.hbtn { display: flex; align-items: center; justify-content: center; width: 15px; height: 15px; background: #fff; border: 1px solid #ababab; flex: none; }
.hthumb { width: 387px; height: 15px; background: #fff; border: 1px solid #ababab; border-left: 0; flex: none; }
.htrack { flex: 1; height: 13px; background: #d6d6d6; }

.status { display: flex; align-items: center; height: 21px; background: #f3f2f1; flex: none; }
.ready { margin-left: 8px; width: 972px; font-size: 11px; color: #444; }
.vw { display: flex; align-items: center; justify-content: center; width: 40px; height: 21px; }
.vw-on { background: #d2d0ce; }
.zm { font-size: 13px; width: 10px; text-align: center; color: #444; margin-left: 5px; }
.slider { position: relative; width: 100px; height: 1px; background: #a6a6a6; margin: 0 0 0 4px; }
.slider i { position: absolute; left: 47px; top: -6px; width: 5px; height: 13px; background: #7a7a7a; }
.zm + .slider + .zm { margin-left: 4px; }
.pct { font-size: 11px; margin-left: 8px; color: #444; white-space: nowrap; }

.taskbar { display: flex; align-items: center; height: 40px; background: #5fc4ea; flex: none; border-top: 1px solid #3d88a8; border-bottom: 1px solid #3d88a8; }
.tk { display: flex; align-items: center; justify-content: center; width: 62px; height: 38px; flex: none; }
.tk-start { width: 50px; }
.tk-sep { border-left: 1px solid #48a0c4; }
.tk-on { background: #9fddf4; border-left: 1px solid #2f6f8a; border-right: 1px solid #48a0c4; }
.tk-open { background: #74cdee; border-left: 1px solid #2f6f8a; border-right: 1px solid #2f6f8a; }
.cmd { display: block; width: 30px; height: 28px; background: #0c0c0c; color: #fff; font-family: "Liberation Mono", monospace; font-size: 10px; line-height: 20px; padding-left: 2px; box-shadow: 0 -2px 0 #666; white-space: nowrap; overflow: hidden; }
.app-l { font-family: "Liberation Sans", sans-serif; font-weight: 700; font-size: 14px; fill: #fff; text-anchor: middle; }
.tray { display: flex; align-items: center; gap: 7px; margin-left: auto; padding-right: 16px; }
.tray-up { margin-right: 9px; }
.lang { font-size: 11.500px; color: #222; margin-left: 10px; }
.clock { display: flex; flex-direction: column; align-items: center; font-size: 11.500px; line-height: 17px; color: #222; margin-left: 7px; }
```
